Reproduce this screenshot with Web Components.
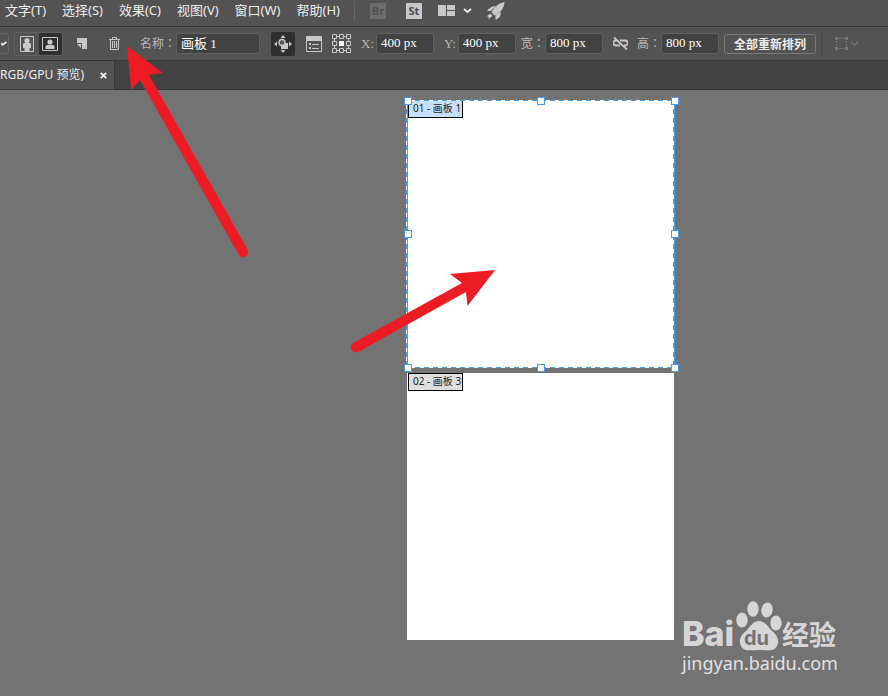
<!DOCTYPE html>
<html lang="zh-CN">
<head>
<meta charset="utf-8">
<title>画板</title>
<style>
html,body{margin:0}
body{font:13px/20px "Noto Sans","Noto Sans CJK SC",sans-serif;color:#ececec;background:#737373;overflow:hidden}
</style>
</head>
<body>
<app-shell></app-shell>
<script>
function define(name, html, init){
  customElements.define(name, class extends HTMLElement{
    constructor(){super();this.attachShadow({mode:'open'});}
    connectedCallback(){
      const t=document.createElement('template');
      t.innerHTML='<style>*{box-sizing:border-box}button,input{font:inherit;color:inherit;border:0;margin:0;padding:0;background:none}svg{display:block;flex:none}</style>'+(typeof html==='function'?html(this):html);
      this.shadowRoot.replaceChildren(t.content.cloneNode(true));
    }
  });
}

define('menu-item', `<style>:host{display:block;flex:none}button{display:block;line-height:20px;white-space:nowrap}</style><button type="button"><slot></slot></button>`);

define('icon-button', el=>`<style>
:host{display:block;flex:none}
button{display:flex;align-items:center;justify-content:center;width:100%;height:100%;border-radius:2px;color:#c8c8c8}
:host([pressed]) button{background:#2f2f2f}
::slotted(svg){flex:none}
</style><button type="button" aria-label="${el.getAttribute('label')}"><slot></slot></button>`);

define('value-field', el=>`<style>
:host{display:flex;align-items:center;flex:none;font-size:12px}
label{color:#b8b8b8;white-space:nowrap;line-height:20px}
label span{font-family:"Noto Sans CJK TC",sans-serif}
input{width:var(--field,58px);height:21px;padding:0 4px 2px;background:#424242;border:1px solid #606060;border-radius:3px;color:#fff;font:13px/18px "Liberation Serif","Noto Sans CJK SC",serif}
:host([latin]){gap:2px}
:host([latin]) label{font-family:"Liberation Serif",serif;font-size:13px}
</style><label for="v">${el.getAttribute('label').replace('：','<span lang="zh-Hant">：</span>')}</label><input id="v" type="text" value="${el.getAttribute('value')}">`);

define('menu-bar', `<style>
:host{display:flex;align-items:center;height:27px;padding:0 5px 5px;background:#535353;border-bottom:1px solid #383838}
nav{display:flex;gap:16px;padding-bottom:1px}
i{width:1px;height:20px;background:#646464;margin:0 15px 0 14px;flex:none}
.badge{width:16px;height:16px;background:#c8c8c8;color:#4a4a4a;font:700 11px/16px "Open Sans",sans-serif;text-align:center}
.off .badge{background:#6d6d6d;color:#505050}
.st{margin-left:20px}.lay{margin-left:16px}.rk{margin-left:15px}
</style>
<nav><menu-item>文字(T)</menu-item><menu-item>选择(S)</menu-item><menu-item>效果(C)</menu-item><menu-item>视图(V)</menu-item><menu-item>窗口(W)</menu-item><menu-item>帮助(H)</menu-item></nav>
<i></i>
<icon-button class="off" label="Bridge"><span class="badge">Br</span></icon-button>
<icon-button class="st" label="Stock"><span class="badge">St</span></icon-button>
<icon-button class="lay" label="排列文档"><svg width="34" height="13" viewBox="0 0 34 13"><path fill="#c8c8c8" d="M0 1h8v11H0zM9 1h8v5H9zM9 7h8v5H9z"/><path d="M26 5l3.500 3 3.500-3" fill="none" stroke="#eee" stroke-width="1.800"/></svg></icon-button>
<icon-button class="rk" label="GPU 性能"><svg width="18" height="18" viewBox="0 0 18 18" fill="#c8c8c8"><path d="M17.500 0C12 1 8 4 4.500 10l3 3.500C13 11 17 7 17.500 0z"/><path d="M8.500 4C5 4 2 6 0 9l4 0zM13.500 10c1 3-1 6-5 8l0-5zM3.500 11.500L0 14l2 1.500-1 2 4.500-3.500z"/></svg></icon-button>`);

define('control-bar', `<style>
:host{display:flex;align-items:center;height:34px;background:#535353;border-bottom:1px solid #383838}
.preset{width:9px;height:21px;border:1px solid #646464;border-left:0;border-radius:0 3px 3px 0}
.pair{display:flex;flex:none;margin-left:5px;border:1px solid #606060;border-radius:3px;width:49px;height:24px}
.pair icon-button{flex:1}
.new{margin-left:14px}.trash{margin-left:22px}.name{--field:84px;margin-left:20px}
.move{width:24px;height:24px;margin-left:11px}.list{margin-left:11px}.ref{margin-left:10px}
.x{margin-left:10px}.y{margin-left:10px}.w{margin-left:5px}.link{margin-left:10px}.h{margin-left:9px}
.all{flex:none;margin-left:5px;width:92px;height:20px;border:1px solid #7a7a7a;border-radius:3px;font:700 12px/18px "Noto Sans CJK SC",sans-serif;white-space:nowrap;color:#eee}
i{width:2px;height:24px;background:#4a4a4a;margin:0 11px 0 5px;flex:none}
</style>
<icon-button class="preset" label="预设"><svg width="7" height="6" viewBox="0 0 7 6"><path d="M0 2l1.500 2L5.500 1" fill="none" stroke="#eee" stroke-width="1.600"/></svg></icon-button>
<div class="pair">
<icon-button label="纵向"><svg width="14" height="16" viewBox="0 0 14 16"><path d="M.5.5h13v15H.5z" fill="none" stroke="#c8c8c8"/><circle cx="7" cy="4.500" r="2.600" fill="#c8c8c8"/><path d="M4 7h6l1 1v4H9.500v3h-5v-3H3V8z" fill="#c8c8c8"/></svg></icon-button>
<icon-button label="横向" pressed><svg width="16" height="14" viewBox="0 0 16 14"><path d="M.5.5h15v13H.5z" fill="none" stroke="#c8c8c8"/><circle cx="8" cy="5" r="2.600" fill="#c8c8c8"/><path d="M5 8h6l1.500 1v3h-9V9z" fill="#c8c8c8"/></svg></icon-button>
</div>
<icon-button class="new" label="新建画板"><svg width="10" height="11" viewBox="0 0 10 11" fill="#c8c8c8"><path d="M0 0h10v11H5V5H0zM0 6h4v4z"/></svg></icon-button>
<icon-button class="trash" label="删除画板"><svg width="11" height="13" viewBox="0 0 11 13" fill="none" stroke="#c8c8c8"><path d="M0 2.500h11M3.500 2V.5h4V2M1.500 3v9.500h8V3M3.500 4v7M5.500 4v7M7.500 4v7"/></svg></icon-button>
<value-field class="name" label="名称：" value="画板 1"></value-field>
<icon-button class="move" label="移动画稿" pressed><svg width="18" height="18" viewBox="0 0 18 18" fill="#c8c8c8"><path d="M9 0l2.500 3h-5zM9 18l2.500-3h-5zM0 9l3-2.500v5zM18 9l-3-2.500v5zM9 8h5v6H7v-3z"/><circle cx="8" cy="7.500" r="3" fill="#555" stroke="#c8c8c8" stroke-width="1.400"/></svg></icon-button>
<icon-button class="list" label="画板选项"><svg width="16" height="16" viewBox="0 0 16 16" fill="#c8c8c8"><path d="M.5.5h15v15H.5z" fill="none" stroke="#c8c8c8"/><path d="M1 1h14v4H1zM3 7h2v2H3zM6 8h7v1H6zM3 11h2v2H3zM6 12h7v1H6z"/></svg></icon-button>
<icon-button class="ref" label="参考点"><svg width="19" height="19" viewBox="0 0 19 19" fill="none" stroke="#c8c8c8"><path d="M.5.5h4v4h-4zM7.500.5h4v4h-4zM14.500.5h4v4h-4zM.5 7.500h4v4h-4zM14.500 7.500h4v4h-4zM.5 14.500h4v4h-4zM7.500 14.500h4v4h-4zM14.500 14.500h4v4h-4zM5 2.500h2M12 2.500h2M5 16.500h2M12 16.500h2M2.500 5v2M2.500 12v2M16.500 5v2M16.500 12v2"/><path d="M7 7h5v5H7z" fill="#fff" stroke="none"/></svg></icon-button>
<value-field latin class="x" label="X:" value="400 px"></value-field>
<value-field latin class="y" label="Y:" value="400 px"></value-field>
<value-field class="w" label="宽：" value="800 px"></value-field>
<icon-button class="link" label="约束比例"><svg width="15" height="13" viewBox="0 0 15 13" fill="none" stroke="#c8c8c8" stroke-width="1.800"><path d="M4 3.500H3a2.500 2.500 0 0 0 0 5h4M7 3.500h5a2.500 2.500 0 0 1 0 5h-1M1 .5l13 12"/></svg></icon-button>
<value-field class="h" label="高：" value="800 px"></value-field>
<button class="all" type="button">全部重新排列</button>
<i></i>
<icon-button label="对齐"><svg width="25" height="15" viewBox="0 0 25 15" fill="none" stroke="#777"><path d="M2 2.500h11M2 12.500h11M2.500 2v11M12.500 2v11" stroke-dasharray="2 1"/><path d="M1 1h3v3H1zM11 1h3v3h-3zM1 11h3v3H1zM11 11h3v3h-3z" fill="#777" stroke="none"/><path d="M17 6l3.500 3L24 6" stroke-width="1.500"/></svg></icon-button>`);

define('doc-tabs', `<style>
:host{display:flex;height:29px;background:#424242;border-bottom:1px solid #383838}
.tab{display:flex;align-items:center;justify-content:flex-end;gap:15px;padding-right:6px;min-width:115px;background:#535353;border-right:1px solid #383838;white-space:nowrap;font-size:12px}
.t{flex:none}
icon-button{width:9px;height:9px}
</style><div class="tab"><span class="t">RGB/GPU 预览)</span><icon-button label="关闭"><svg width="7" height="7" viewBox="0 0 7 7"><path d="M.8.8l5.400 5.400M6.200.8L.8 6.200" stroke="#f0f0f0" stroke-width="1.800"/></svg></icon-button></div>`);

define('art-board', `<style>
:host{display:block;background:#fff}
span{display:block;width:max-content;margin-left:1px;padding:0 1px 2px 4px;border:1px solid #000;background:var(--tag,#dedede);color:#222;font-size:10px;line-height:14px;white-space:nowrap;min-width:55px}
</style><span><slot></slot></span>`);

define('selection-frame', ()=>{
  let h='';
  for(const x of [2,135,269])for(const y of [1,134,268])if(x!==135||y!==134)h+=`<rect x="${x-3.5}" y="${y-3.5}" width="7" height="7"/>`;
  return `<style>:host{display:block}svg{overflow:visible}</style><svg width="269" height="268" fill="none"><path d="M0 .5h268M0 267.500h268M.5 0v268M267.500 0v268" stroke="#fff"/><path d="M0 .5h268M0 267.500h268M.5 0v268M267.500 0v268" stroke="#459cf0" stroke-dasharray="5 4"/><path d="M1.500 0v268M268.500 0v268" stroke="#459cf0"/><g fill="#fff" stroke="#459cf0">${h}</g></svg>`;
});

define('brand-mark', `<style>
:host{display:block;color:#d6d6d6;width:160px}
.row{display:flex;align-items:flex-end;height:51px}
.b{font:800 34px/34px Inter,sans-serif;width:54px}
.j{font:700 27px/34px "Noto Sans CJK SC",sans-serif;margin-left:3px;white-space:nowrap}
.paw{position:relative;width:43px;height:51px;flex:none}
.paw svg{overflow:visible}
.paw span{position:absolute;left:8px;top:28px;font:700 20px/20px Inter,sans-serif;color:#737373}
a{display:block;color:#e2e2e2;text-decoration:none;font-size:18px;line-height:24px}
</style>
<div class="row"><span class="b">Bai</span><div class="paw"><svg width="43" height="51" viewBox="0 0 43 51" fill="#d6d6d6"><ellipse cx="6" cy="20" rx="5.700" ry="7.500"/><ellipse cx="17" cy="9" rx="5.700" ry="7.700"/><ellipse cx="31" cy="10" rx="5.700" ry="7.500" transform="rotate(8 31 10)"/><ellipse cx="40" cy="23" rx="5.700" ry="7.500"/><path d="M23 21c6 0 9 6 13 10 5 4 8 9 5 15-3 6-10 4-18 4s-15 2-18-4c-3-6 0-11 5-15 4-4 7-10 13-10z"/></svg><span>du</span></div><span class="j">经验</span></div>
<a href="#">jingyan.baidu.com</a>`);

define('pointer-arrows', `<style>:host{display:block;pointer-events:none}</style><svg width="500" height="360" fill="#ed1c24"><path d="M127 46l36 27-14 2 98.500 174.500a5 5 0 0 1-9 5L140 80l-9 10z"/><path d="M495 270l-45 4 12 9-108 59.500a5 5 0 0 0 4 9.500L466 292l1.500 14z"/></svg>`);

define('art-canvas', `<style>
:host{display:block;position:relative;flex:1;background:#737373;overflow:hidden}
art-board,selection-frame,brand-mark{position:absolute}
.one{left:407px;top:10px;width:267px;height:268px;--tag:#c6e0fc}
.two{left:407px;top:283px;width:267px;height:267px;}
selection-frame{left:406px;top:10px}
brand-mark{right:46px;bottom:21px}
</style>
<art-board class="one">01 - 画板 1</art-board><art-board class="two">02 - 画板 3</art-board><selection-frame></selection-frame><brand-mark></brand-mark>`);

define('app-shell', `<style>
:host{display:flex;flex-direction:column;position:relative;min-height:100vh;overflow:hidden}
pointer-arrows{position:absolute;left:0;top:0}
</style><menu-bar></menu-bar><control-bar></control-bar><doc-tabs></doc-tabs><art-canvas></art-canvas><pointer-arrows></pointer-arrows>`);
</script>
</body>
</html>
